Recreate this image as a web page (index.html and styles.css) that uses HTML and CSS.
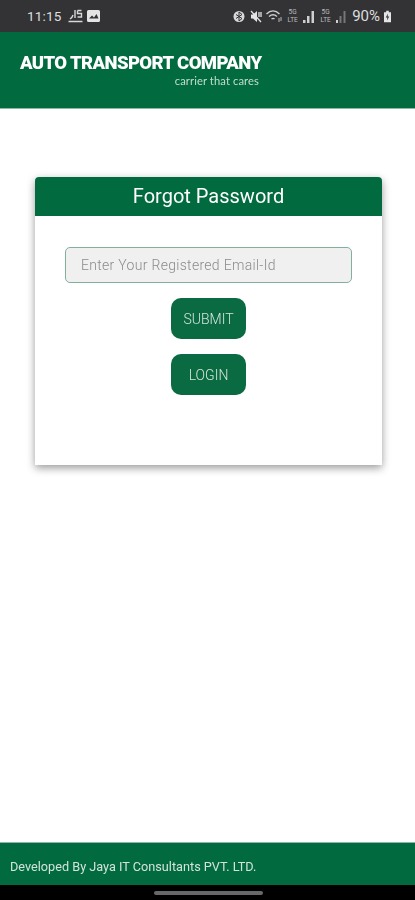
FILE: index.html
```html
<!DOCTYPE html>
<html lang="en">
<head>
  <meta charset="UTF-8" />
  <meta name="viewport" content="width=device-width, initial-scale=1.0" />
  <title>Forgot Password</title>
  <link rel="stylesheet" href="styles.css">
</head>
<body>
  <div class="status">
    <div class="status-left">
      <span class="time">11:15</span>
      <svg class="icon" width="15" height="15" viewBox="0 0 15 15">
        <path d="M7 1v8M9.500 1.500h4M9.500 1.500v3h4v3.500h-4M2 10c1.500-1 2.500-2 3-4M0.500 12.500h14" stroke="#d8d8d8" stroke-width="1.400" fill="none"/>
      </svg>
      <svg class="icon" width="13" height="12" viewBox="0 0 13 12">
        <path d="M0 1.500A1.500 1.500 0 0 1 1.500 0h10A1.500 1.500 0 0 1 13 1.500v9a1.500 1.500 0 0 1-1.500 1.500h-10A1.500 1.500 0 0 1 0 10.500z" fill="#e4e4e4"/>
        <path d="M2 8.500l3-3 2 2 2.500-3.500 2 4.500z" fill="#333336"/>
      </svg>
    </div>
    <div class="status-right">
      <svg width="12" height="13" viewBox="0 0 12 13"><circle cx="6" cy="6.500" r="5.500" fill="#d8d8d8"/><path d="M3 4.500l6 4-3 2.500v-9l3 2.500-6 4" stroke="#333336" fill="none"/></svg>
      <svg class="mute" width="12" height="13" viewBox="0 0 12 13"><path d="M1 4.500h2l4-3.500v11l-4-3.500H1z" fill="#e4e4e4"/><path d="M9 2v5M11 2v5M1 1l10 11" stroke="#e4e4e4" stroke-width="1.300"/></svg>
      <svg class="wifi" width="16" height="12" viewBox="0 0 16 12"><path d="M0.500 4c4-4 9-4 13 0M3 6.500c3-2.500 5-2.500 8 0M5.500 9c1.500-1 2-1 3 0" stroke="#d0d0d0" stroke-width="1.400" fill="none"/><path d="M13 8v4M15 7v4" stroke="#bbb" stroke-width="1"/></svg>
      <span class="net">
        <span class="net-label">5G<br>LTE</span>
        <svg width="13" height="13" viewBox="0 0 13 13"><path d="M1 13v-3h2.500v3zM5 13V6h2.500v7zM9.500 13V1H12v12z" fill="#cfcfcf"/></svg>
      </span>
      <span class="net">
        <span class="net-label">5G<br>LTE</span>
        <svg width="11" height="13" viewBox="0 0 11 13"><path d="M1 13v-3h2v3z" fill="#cfcfcf"/><path d="M4.500 13V6h2v7zM8.500 13V1h2v12z" fill="#77777a"/></svg>
      </span>
      <span class="battery-text">90%</span>
      <svg class="battery" width="7" height="13" viewBox="0 0 8 13"><path d="M2.500 0h3v1.500H8V13H0V1.500h2.500z" fill="#e4e4e4"/><path d="M4.500 3L2 7.500h1.800L3.500 11 6 6.500H4.200z" fill="#333336"/></svg>
    </div>
  </div>

  <header class="brand">
    <div class="logo">
      <div class="logo-name">AUTO TRANSPORT COMPANY</div>
      <div class="logo-tag">carrier that cares</div>
    </div>
  </header>

  <main class="main">
    <div class="card">
      <h1 class="card-title">Forgot Password</h1>
      <div class="card-body">
        <input class="email" type="text" placeholder="Enter Your Registered Email-Id" />
        <button class="btn">SUBMIT</button>
        <button class="btn">LOGIN</button>
      </div>
    </div>
  </main>

  <footer class="footer">Developed By Jaya IT Consultants PVT. LTD.</footer>

  <div class="navbar"><div class="home-bar"></div></div>
</body>
</html>
```

FILE: styles.css
```css
* {
  box-sizing: border-box;
}
body {
  margin: 0;
  height: 900px;
  overflow: hidden;
  display: flex;
  flex-direction: column;
  font-family: Roboto, sans-serif;
  background: #fff;
  /* the reference is a soft, upscaled capture */
  filter: blur(0.4px);
}

.status {
  height: 32px;
  flex: none;
  background: #333336;
  color: #dedede;
  display: flex;
  align-items: center;
  justify-content: space-between;
  padding: 0 24px 0 27px;
}
.status-left,
.status-right {
  display: flex;
  align-items: center;
}
.status-left {
  gap: 4px;
}
.status-right {
  gap: 3px;
}
.time {
  font-size: 13.500px;
  letter-spacing: 0.2px;
  margin-right: 2px;
}
.mute {
  margin-left: 2px;
}
.wifi {
  margin-left: 1px;
}
.net {
  display: flex;
  align-items: center;
  gap: 2px;
}
.net-label {
  font-size: 6.500px;
  line-height: 8px;
  color: #bdbdbd;
  text-align: center;
  width: 15px;
}
.battery-text {
  font-size: 15px;
  margin-left: 3px;
}
.battery {
  margin-left: 1px;
}

.brand {
  height: 77px;
  flex: none;
  background: #016a3e;
  border-bottom: 1px solid #8fb8a4;
  padding: 20px 0 0 20px;
}
.logo {
  width: 242px;
  color: #fff;
}
.logo-name {
  font-family: Roboto, sans-serif;
  font-size: 18.500px;
  font-weight: 900;
  letter-spacing: -0.6px;
  line-height: 22px;
  white-space: nowrap;
}
.logo-tag {
  font-family: Lato, sans-serif;
  font-size: 11.200px;
  letter-spacing: 0.1px;
  line-height: 13px;
  color: #c5ddd0;
  text-align: right;
  padding-right: 3px;
}

.main {
  flex: 1;
  padding: 68px 33px 0 35px;
}
.card {
  height: 288px;
  display: flex;
  flex-direction: column;
  box-shadow: 0 3px 8px rgba(0, 0, 0, 0.4);
  border-radius: 4px 4px 0 0;
}
.card-title {
  margin: 0;
  height: 39px;
  flex: none;
  background: #016a3e;
  border-radius: 4px 4px 0 0;
  color: #fff;
  font-size: 20px;
  font-weight: 400;
  line-height: 39px;
  text-align: center;
}
.card-body {
  flex: 1;
  display: flex;
  flex-direction: column;
  align-items: center;
  padding-top: 31px;
  background: #fff;
}
.email {
  width: 287px;
  height: 36px;
  padding: 0 15px;
  margin-bottom: 15px;
  background: #f0f0f0;
  border: 1px solid #83b09b;
  border-radius: 5px;
  font-family: Roboto, sans-serif;
  font-size: 14px;
  font-weight: 300;
  letter-spacing: 0.3px;
}
.email::placeholder {
  color: #8b8b8b;
}
.btn {
  width: 75px;
  height: 41px;
  margin-bottom: 15px;
  background: #0a6a42;
  border: none;
  border-radius: 10px;
  color: #d5e6dc;
  font-family: Roboto, sans-serif;
  font-size: 14px;
  font-weight: 300;
}

.footer {
  height: 43px;
  flex: none;
  background: #016a3e;
  border-top: 1px solid #8fb8a4;
  color: #d3e3da;
  font-size: 12.700px;
  line-height: 48px;
  padding-left: 10px;
}
.navbar {
  height: 15px;
  flex: none;
  background: #000;
  display: flex;
  justify-content: center;
  padding: 6px 0 0 2px;
}
.home-bar {
  width: 109px;
  height: 4px;
  border-radius: 2px;
  background: #68686a;
}
```
